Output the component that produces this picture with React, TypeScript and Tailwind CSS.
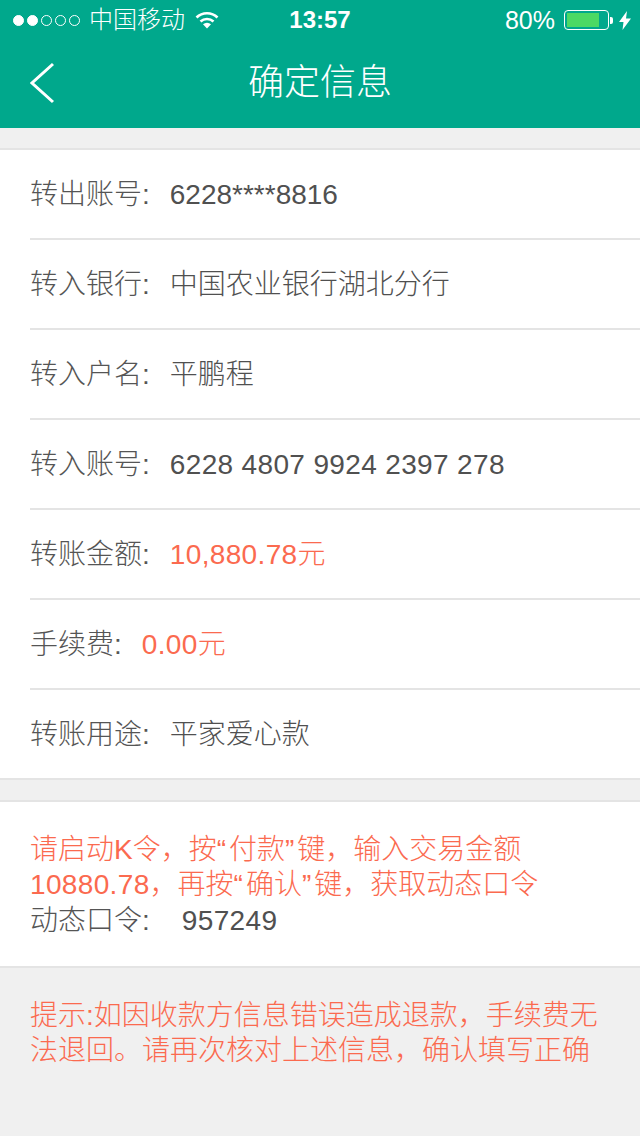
const FONT = "font-['Liberation_Sans','Noto_Sans_CJK_SC',sans-serif]";

const rows: { label: string; value: string; red?: boolean; num?: boolean }[] = [
  { label: "转出账号:", value: "6228****8816" },
  { label: "转入银行:", value: "中国农业银行湖北分行" },
  { label: "转入户名:", value: "平鹏程" },
  { label: "转入账号:", value: "6228 4807 9924 2397 278", num: true },
  { label: "转账金额:", value: "10,880.78元", red: true, num: true },
  { label: "手续费:", value: "0.00元", red: true, num: true },
  { label: "转账用途:", value: "平家爱心款" },
];

// the quotes are wider in the picture than in the Latin font
function Q({ children }: { children: string }) {
  return <span className="tracking-[3px]">{children}</span>;
}

function StatusBar() {
  return (
    <div className="grid h-10 grid-cols-3 items-center text-white">
      <div className="flex items-center pl-[13px] whitespace-nowrap">
        <div className="flex shrink-0 gap-[3px]">
          {[0, 1, 2, 3, 4].map((i) => (
            <span
              key={i}
              className={`h-[11px] w-[11px] rounded-full border border-white ${i < 2 ? "bg-white" : ""}`}
            />
          ))}
        </div>
        <span className="ml-[9px] shrink-0 text-2xl leading-none font-light">中国移动</span>
        <svg className="ml-[10px] shrink-0" width="24" height="18" viewBox="0 0 24 18" fill="none">
          <path d="M1.5 6.5a15 15 0 0 1 21 0" stroke="white" strokeWidth="2.6" />
          <path d="M5.5 10.5a9.5 9.5 0 0 1 13 0" stroke="white" strokeWidth="2.6" />
          <path d="M8 13.2a6 6 0 0 1 8 0L12 17.5z" fill="white" />
        </svg>
      </div>
      <div className="text-center text-2xl leading-none font-bold">13:57</div>
      <div className="flex items-center justify-end pr-[9px]">
        <span className="text-[25px] leading-none">80%</span>
        <div className="ml-[9px] flex h-5 w-[45px] items-stretch rounded-[4px] border border-white p-[2px]">
          <div className="w-[32px] bg-[#4cd964]" />
        </div>
        <div className="ml-[1px] h-[7px] w-[3px] rounded-r-[2px] bg-white" />
        <svg className="ml-[6px]" width="12" height="19" viewBox="0 0 12 19">
          <path d="M8 0 0 11h4.5L3.5 19 12 7.5H7z" fill="white" />
        </svg>
      </div>
    </div>
  );
}

function NavBar() {
  return (
    <div className="grid h-[88px] grid-cols-3 items-center bg-[#00a88c] pb-[3px] text-white">
      <div className="pl-[30px]">
        <svg width="26" height="44" viewBox="0 0 26 44" fill="none">
          <path d="M23 3 2 22l21 19" stroke="white" strokeWidth="3" />
        </svg>
      </div>
      <h1 className="text-center text-[36px] leading-none font-light whitespace-nowrap">确定信息</h1>
    </div>
  );
}

export default function App() {
  return (
    <div className={`flex min-h-[1136px] flex-col bg-[#f0f0f0] font-light ${FONT}`}>
      <div className="bg-[#00a88c]">
        <StatusBar />
        <NavBar />
      </div>

      <div className="mt-5 border-y-2 border-[#e4e4e4] bg-white">
        <div className="pl-[30px]">
          {rows.map((r, i) => (
            <div
              key={r.label}
              className={`flex items-center pt-px text-[28px] ${i < rows.length - 1 ? "h-[90px] border-b-2 border-[#e4e4e4]" : "h-[88px]"}`}
            >
              <span className="text-[#555555]">{r.label}</span>
              <span
                className={`ml-5 ${r.red ? "text-[#fb6a4f]" : "text-[#505050]"} ${r.num ? "tracking-[0.35px]" : ""}`}
              >
                {r.value}
              </span>
            </div>
          ))}
        </div>
      </div>

      <div className="mt-5 border-y-2 border-[#e4e4e4] bg-white px-[30px] pt-[30px] pb-[27px] text-[28px]">
        <p className="leading-[35px] text-[#fb6a4f]">
          请启动K令，按<Q>“</Q>付款<Q>”</Q>键，输入交易金额
          <br />
          <span className="tracking-[0.35px]">10880.78</span>，再按<Q>“</Q>确认<Q>”</Q>键，获取动态口令
        </p>
        <p className="mt-[1px] leading-[36px] text-[#555555]">
          动态口令:<span className="ml-8 tracking-[0.35px] text-[#505050]">957249</span>
        </p>
      </div>

      <p className="px-[30px] pt-[30px] text-[28px] leading-[35px] text-[#fb6a4f]">
        提示:如因收款方信息错误造成退款，手续费无
        <br />
        法退回。请再次核对上述信息，确认填写正确
      </p>
    </div>
  );
}
